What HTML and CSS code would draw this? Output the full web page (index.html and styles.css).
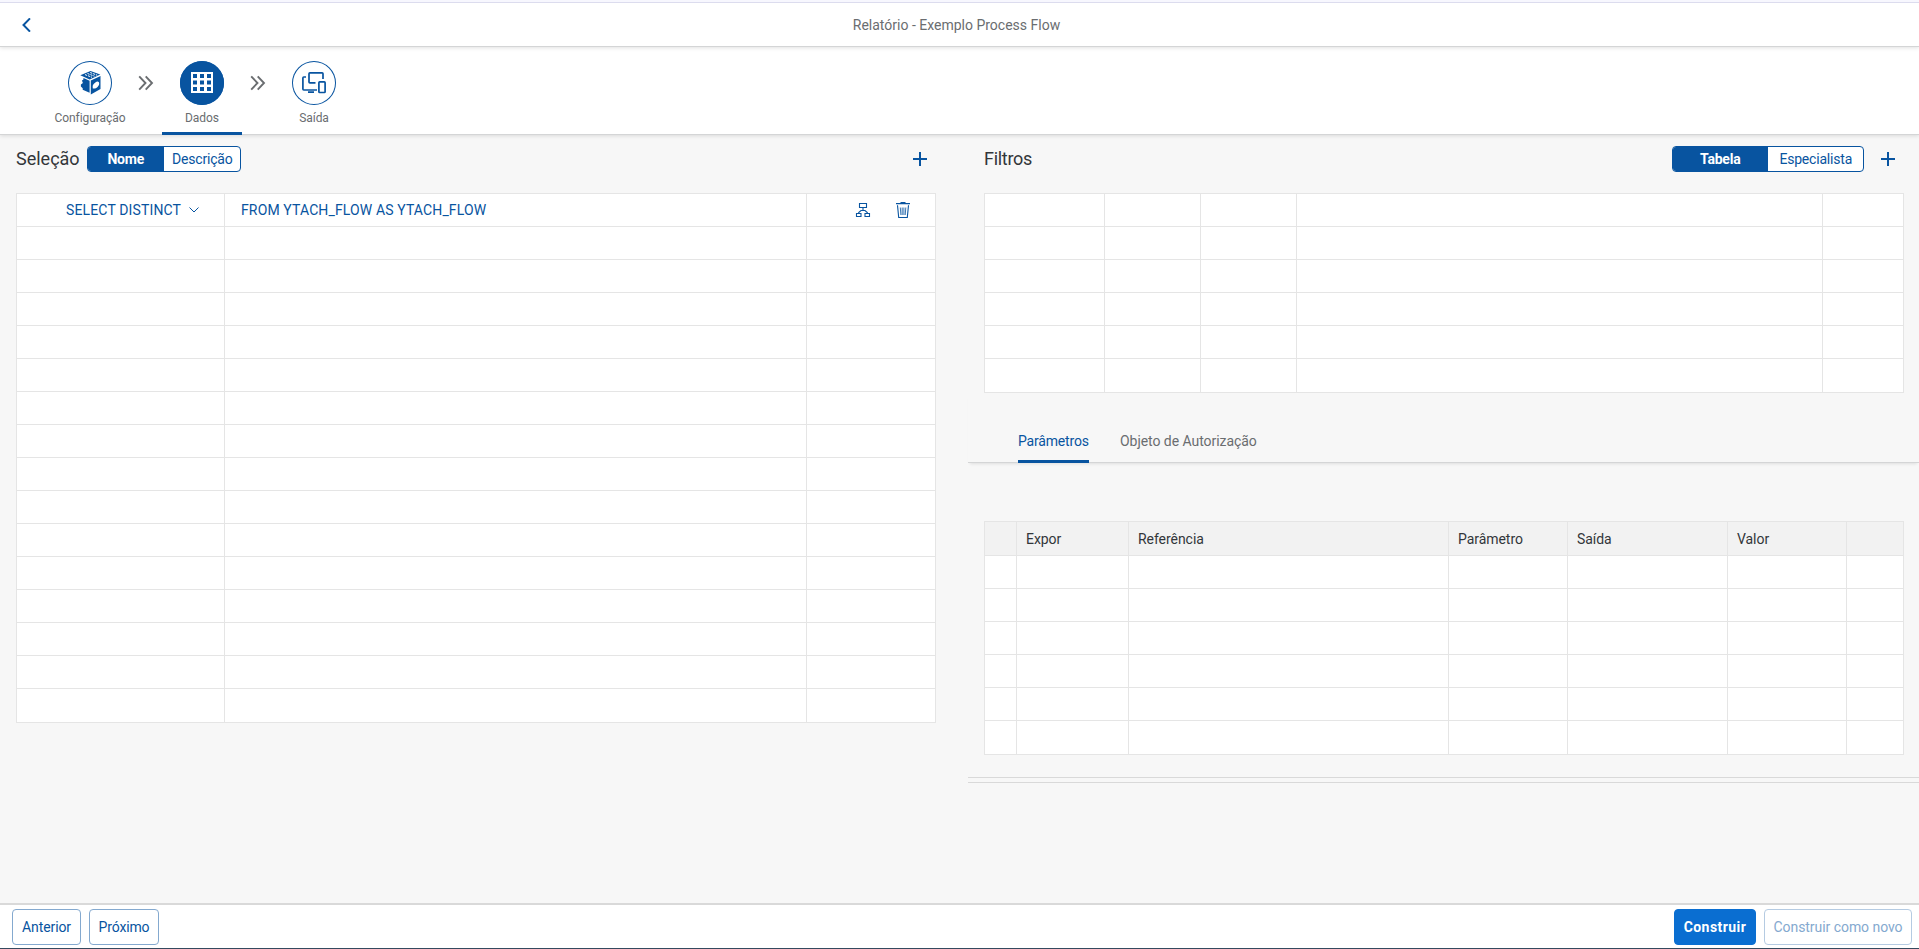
FILE: index.html
```html
<!DOCTYPE html>
<html lang="pt">
<head>
<meta charset="utf-8">
<title>Relatório - Exemplo Process Flow</title>
<link rel="stylesheet" href="styles.css">
</head>
<body>
<div class="page">
  <header class="header">
    <svg class="back" width="9" height="14" viewBox="0 0 9 14"><path d="M8 .4 1.500 7 8 13.600" fill="none" stroke="#0854a0" stroke-width="2"/></svg>
    <h1 class="header-title">Relatório - Exemplo Process Flow</h1>
  </header>

  <nav class="steps">
    <div class="step">
      <span class="circle">
        <svg width="44" height="44" viewBox="0 0 44 44">
          <path fill="#0854a0" d="M12.300 14.200 22.500 10l9.800 3.600-10.600 4.900z"/>
          <path fill="#0854a0" d="M15.500 17l6.100 2.800v12l-6.900-3v-1.600l-1.800-1.600v-2l2-1.600-1-2.400 1.400-.8zM22.800 19.600l9.700-4.500v13l-9.700 5.400z"/>
          <path fill="#fff" d="M24.800 27.400c0-1.300-.5-3 .7-4.200.9-.9 1.700-1.900 3.100-2.500 1.300-.6 2.700.3 2.600 2-.1 1.600-1.200 2.800-2.200 3.700-.9.900-1.700 1.200-2.600 1.100z"/>
          <path stroke="#fff" stroke-width="1" stroke-dasharray="2.200 .9" d="M17 13.600 24 16.300M19.500 12.500l7 2.700M22.200 11.500l7 2.700"/>
        </svg>
      </span>
      <span class="step-label">Configuração</span>
    </div>
    <svg class="sep" width="16" height="16" viewBox="0 0 16 16"><path d="M1.200 1.300 7.500 8l-6.300 6.700M7.700 1.300 14 8l-6.300 6.700" fill="none" stroke="#6a6d70" stroke-width="1.900"/></svg>
    <div class="step step-active">
      <span class="circle circle-on">
        <svg width="44" height="44" viewBox="0 0 44 44"><path fill="#fff" fill-rule="evenodd" d="M11 11h22v21H11zM13 13v4h4v-4zM20 13v4h4v-4zM27 13v4h4v-4zM13 19.500v4h4v-4zM20 19.500v4h4v-4zM27 19.500v4h4v-4zM13 26v4h4v-4zM20 26v4h4v-4zM27 26v4h4v-4z"/></svg>
      </span>
      <span class="step-label">Dados</span>
    </div>
    <svg class="sep" width="16" height="16" viewBox="0 0 16 16"><path d="M1.200 1.300 7.500 8l-6.300 6.700M7.700 1.300 14 8l-6.300 6.700" fill="none" stroke="#6a6d70" stroke-width="1.900"/></svg>
    <div class="step">
      <span class="circle">
        <svg width="44" height="44" viewBox="0 0 44 44" fill="none" stroke="#0854a0" stroke-width="1.700">
          <path d="M14 16h-2.200q-.9 0-.9.900v11.200q0 .9.900.900H25"/>
          <path d="M23.500 21.900h-5.600q-.9 0-.9-.9v-8.200q0-.9.900-.9h12.200q.9 0 .9.900V18M16 31.100h6"/>
          <rect x="26.900" y="20.900" width="6.200" height="10.600" rx=".8"/>
        </svg>
      </span>
      <span class="step-label">Saída</span>
    </div>
  </nav>

  <main class="content">
    <section class="pane">
      <div class="toolbar">
        <h2 class="title">Seleção</h2>
        <div class="segmented seg-left"><span class="seg on">Nome</span><span class="seg">Descrição</span></div>
        <svg class="plus plus-left" width="14" height="14" viewBox="0 0 14 14"><path d="M7 0v14M0 7h14" stroke="#0854a0" stroke-width="2"/></svg>
      </div>
      <div class="grid grid-sel" data-rows="15">
        <div class="cell select">SELECT DISTINCT
          <svg width="10" height="6" viewBox="0 0 10 6"><path d="M.5.5 5 5 9.500.5" fill="none" stroke="#0854a0" stroke-width="1"/></svg>
        </div>
        <div class="cell from">FROM YTACH_FLOW AS YTACH_FLOW</div>
        <div class="cell actions">
          <svg width="16" height="16" viewBox="0 0 16 16" fill="none" stroke="#0854a0" stroke-width="1.100"><path d="M4.500 1.500h7v4h-7zM1.500 11.500h4.500v3H1.500zM10 11.500h4.500v3H10zM8 5.600v2.900M3.700 11.500v-1L6 8.500h4l2.300 2v1"/></svg>
          <svg width="16" height="18" viewBox="0 0 16 18" fill="none" stroke="#0854a0"><path stroke-width="1.200" d="M1 2.700h14M5.500 1.500h5"/><path stroke-width="1.100" d="M2.500 4.200 3.700 16.500h8.600L13.500 4.200"/><path stroke-width=".8" d="M5.300 6.500l.6 7.500M7.200 6.500V14M8.900 6.500V14M10.800 6.500l-.6 7.500"/></svg>
        </div>
      </div>
    </section>

    <section class="pane">
      <div class="toolbar">
        <h2 class="title title-filters">Filtros</h2>
        <div class="segmented seg-right"><span class="seg on">Tabela</span><span class="seg">Especialista</span></div>
        <svg class="plus" width="14" height="14" viewBox="0 0 14 14"><path d="M7 0v14M0 7h14" stroke="#0854a0" stroke-width="2"/></svg>
      </div>
      <div class="grid grid-filters" data-rows="6"></div>
      <div class="tabs"><span class="tab-item active">Parâmetros</span><span class="tab-item">Objeto de Autorização</span></div>
      <div class="grid grid-params" data-rows="6">
        <div class="cell head"></div><div class="cell head">Expor</div><div class="cell head">Referência</div><div class="cell head">Parâmetro</div><div class="cell head">Saída</div><div class="cell head">Valor</div><div class="cell head"></div>
      </div>
      <div class="splitter"></div>
    </section>
  </main>

  <footer class="footer">
    <button class="btn prev">Anterior</button>
    <button class="btn next">Próximo</button>
    <button class="btn build">Construir</button>
    <button class="btn build-new">Construir como novo</button>
  </footer>
</div>
<script src="grid.js"></script>
</body>
</html>
```
FILE: styles.css
```css
* { box-sizing: border-box; }
body { margin: 0; background: #f7f7f7; font-family: Roboto, "Liberation Sans", sans-serif; font-size: 14px; color: #32363a; }
h1, h2 { margin: 0; font-weight: 400; }
svg { display: block; flex: none; }

.page { height: 949px; display: flex; flex-direction: column; border-bottom: 1px solid #354a5f; overflow: hidden; }

.header { height: 47px; flex: none; display: flex; align-items: center; background: linear-gradient(#f7f7fe 2px, #dcdcee 2px, #dcdcee 3px, #fff 3px); border-bottom: 1px solid #d4d5d6; padding: 4px 22px 0; box-shadow: 0 1px 4px rgba(0,0,0,.12); z-index: 2; }
.header-title { flex: 1; text-align: center; font-size: 14px; color: #6a6d70; margin-left: -15px; }

.steps { height: 88px; flex: none; display: flex; background: #fff; border-bottom: 1px solid #d4d5d6; padding: 14px 0 0 50px; box-shadow: 0 1px 4px rgba(0,0,0,.12); z-index: 1; }
.step { width: 80px; height: 74px; display: flex; flex-direction: column; align-items: center; }
.step-active { border-bottom: 3px solid #0854a0; border-radius: 2px 2px 0 0; }
.circle { width: 44px; height: 44px; border-radius: 50%; box-shadow: inset 0 0 0 1px #0854a0; }
.circle-on { background: #0854a0; }
.step-label { margin-top: 6px; line-height: 15px; font-size: 12px; letter-spacing: -.05px; color: #6a6d70; }
.sep { margin: 14px 8px 0; }

.content { flex: 1; display: flex; }
.pane { display: flex; flex-direction: column; width: 968px; }
.pane + .pane { width: 951px; }
.pane > .grid { margin-left: 16px; }
.toolbar { height: 58px; flex: none; display: flex; align-items: flex-start; padding: 11px 0 0 16px; }
.title { font-size: 18px; line-height: 26px; width: 71px; }
.title-filters { letter-spacing: -.3px; }
.segmented { display: flex; height: 26px; border: 1px solid #0854a0; border-radius: 4px; background: #fff; overflow: hidden; line-height: 25px; color: #0854a0; text-align: center; }
.seg { flex: 1; letter-spacing: -.2px; padding-left: 1px; }
.on { background: #0854a0; color: #fff; font-weight: 700; padding-left: 0; }
.seg-left { width: 154px; }
.seg-right { width: 192px; margin-left: auto; margin-right: 17px; }
.plus { margin-top: 6px; margin-right: 24px; }
.plus-left { margin-left: auto; margin-right: 41px; }

.grid { display: grid; width: 920px; border-top: 1px solid #e5e5e5; border-left: 1px solid #e5e5e5; flex: none; }
.cell { height: 33px; background: #fff; border-right: 1px solid #e5e5e5; border-bottom: 1px solid #e5e5e5; }
.last { height: 34px; }
.grid-sel { grid-template-columns: 208px 582px 129px; }
.grid-filters { grid-template-columns: 120px 96px 96px 526px 81px; }
.grid-params { grid-template-columns: 32px 112px 320px 119px 160px 119px 57px; }
.select, .from { color: #0854a0; line-height: 33px; white-space: nowrap; }
.select { display: flex; align-items: center; justify-content: space-between; padding: 0 25px 0 49px; letter-spacing: .14px; }
.from { padding-left: 16px; letter-spacing: .13px; }
.actions { display: flex; align-items: center; gap: 24px; padding-left: 48px; }
.head { height: 34px; background: #f2f2f2; padding-left: 9px; line-height: 34px; letter-spacing: -.05px; }

.tabs { height: 70px; flex: none; display: flex; gap: 31px; margin-bottom: 58px; padding: 23px 0 0 50px; border-bottom: 1px solid #d4d5d6; box-shadow: 0 3px 3px -2px rgba(0,0,0,.1); }
.tab-item { height: 47px; line-height: 50px; color: #6a6d70; letter-spacing: -.05px; }
.active { width: 71px; color: #0854a0; border-bottom: 3px solid #0854a0; border-radius: 2px 2px 0 0; letter-spacing: -.18px; white-space: nowrap; }
.splitter { height: 6px; margin-top: 22px; border-top: 1px solid #d9d9d9; border-bottom: 1px solid #d9d9d9; }

.footer { height: 45px; flex: none; display: flex; background: #fff; border-top: 2px solid #d9d9d9; padding: 4px 7px 0 12px; }
.btn { height: 36px; padding: 0; border: 1px solid #84a9cf; border-radius: 4px; background: #fff; color: #0854a0; font: 14px Roboto, sans-serif; white-space: nowrap; }
.prev { width: 69px; letter-spacing: -.1px; }
.next { width: 70px; margin-left: 8px; letter-spacing: -.15px; }
.build { width: 82px; margin-left: auto; background: #0a6ed1; border-color: #0a6ed1; color: #fff; font-weight: 700; letter-spacing: .45px; }
.build-new { width: 148px; margin-left: 8px; border-color: #b5cbe2; color: #84a9cf; letter-spacing: -.05px; }
```
FILE: grid.js
```js
// Fill each grid with its empty rows.
document.querySelectorAll(".grid").forEach(grid => {
  const cols = getComputedStyle(grid).gridTemplateColumns.split(" ").length;
  const rows = Number(grid.dataset.rows);
  for (let r = 0; r < rows; r++) {
    for (let c = 0; c < cols; c++) {
      const cell = document.createElement("div");
      cell.className = r === rows - 1 ? "cell last" : "cell";
      grid.append(cell);
    }
  }
});
```
